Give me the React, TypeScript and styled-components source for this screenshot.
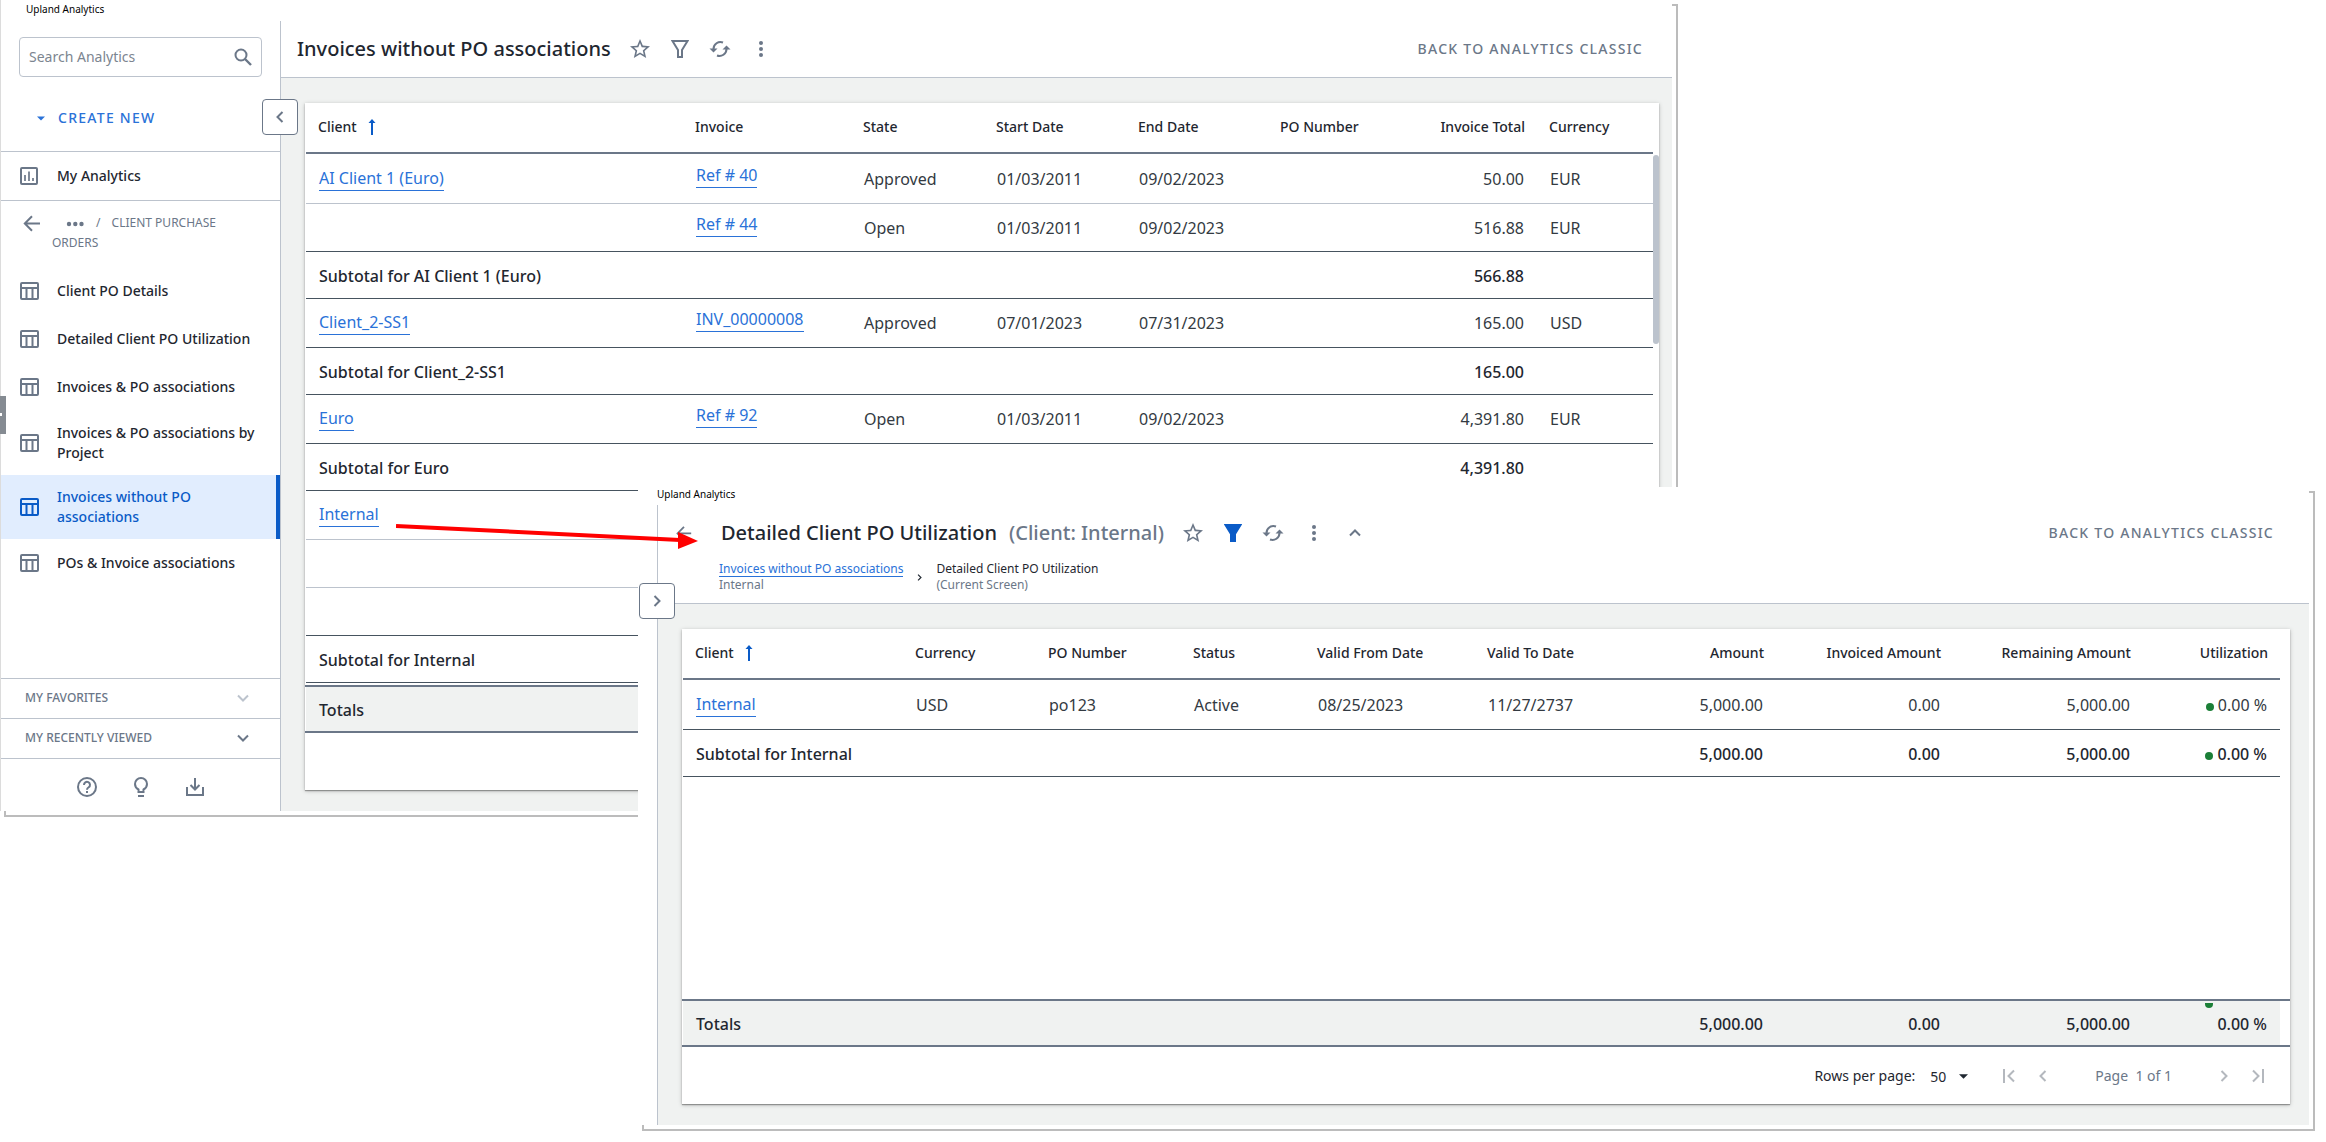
import React from 'react';
import styled, { createGlobalStyle, css } from 'styled-components';

const color = {
  ink: '#1f2730',
  body: '#333a42',
  slate: '#6b7788',
  line: '#bcc3cd',
  rule: '#46535f',
  blue: '#0a5bc7',
  link: '#2a72d8',
  wash: '#f0f2f1',
  pale: '#b4b8be',
  green: '#1b7f37',
};

const GlobalStyle = createGlobalStyle`
  *, *::before, *::after { box-sizing: border-box; }
  body {
    margin: 0;
    background: #fff;
    color: ${color.ink};
    font-family: 'Noto Sans', 'Open Sans', sans-serif;
    font-size: 14px;
    line-height: 20px;
  }
  button, input, select { font: inherit; color: inherit; }
  button { border: 0; padding: 0; background: none; cursor: pointer; }
  a { color: inherit; text-decoration: none; }
  svg { display: block; flex: none; }
`;

/* ---------- desktop and windows ---------- */

const Desktop = styled.div`
  position: relative;
  min-height: 100vh;
  min-width: 1600px;
  overflow: hidden;
`;

const WindowFrame = styled.section<{ $front?: boolean }>`
  position: absolute;
  isolation: isolate;
  padding: 0 6px 6px 0;
  ${(p) =>
    p.$front
      ? css`left: 638px; right: 11px; top: 487px; background: #fff;`
      : css`left: 0; right: 648px; top: 0;`}
  &::before {
    content: '';
    position: absolute;
    inset: 4px 0 0 4px;
    border: 2px solid #bcbcbc;
    z-index: -1;
  }
`;

const WindowBody = styled.div<{ $edge?: boolean }>`
  background: #fff;
  border-left: ${(p) => (p.$edge ? '1px solid #dcdcdc' : '0')};
`;

const Caption = styled.div<{ $front?: boolean }>`
  height: ${(p) => (p.$front ? 18 : 21)}px;
  padding-left: ${(p) => (p.$front ? 19 : 25)}px;
  font-size: 10px;
  line-height: ${(p) => (p.$front ? 14 : 18)}px;
  color: #000;
`;

const Columns = styled.div`
  display: flex;
`;

/* ---------- sidebar ---------- */

const Sidebar = styled.aside`
  display: flex;
  flex-direction: column;
  width: 279px;
  flex: none;
`;

const Rail = styled.div`
  width: 19px;
  flex: none;
`;

const SearchBox = styled.label`
  display: flex;
  align-items: center;
  height: 40px;
  margin: 16px 18px 0;
  padding: 0 8px 0 9px;
  border: 1px solid ${color.line};
  border-radius: 4px;
  color: ${color.slate};
`;

const SearchInput = styled.input`
  flex: 1;
  min-width: 0;
  border: 0;
  outline: 0;
  padding: 0;
  background: none;
  &::placeholder { color: #7c8590; opacity: 1; }
`;

const CreateButton = styled.button`
  display: flex;
  align-items: center;
  gap: 13px;
  margin: 31px 0 23px 36px;
  color: ${color.link};
  font-weight: 500;
  letter-spacing: 0.09em;
`;

const MyAnalytics = styled.a`
  display: flex;
  align-items: center;
  gap: 18px;
  height: 50px;
  padding-left: 18px;
  border: solid ${color.line};
  border-width: 1px 0;
  font-weight: 500;
  svg { color: ${color.slate}; }
`;

const Trail = styled.div`
  display: flex;
  gap: 10px;
  padding: 12px 24px 14px 21px;
  color: ${color.slate};
  font-size: 12px;
`;

const TrailText = styled.div`
  svg { display: inline-block; margin: 0 12px 0 14px; }
  span { margin-right: 8px; }
`;

const NavList = styled.nav`
  flex: 1;
`;

const NavLink = styled.a<{ $active?: boolean }>`
  display: flex;
  align-items: center;
  gap: 18px;
  min-height: 48px;
  padding: 12px 18px;
  font-weight: 500;
  ${(p) =>
    p.$active &&
    css`
      background: #e1edfe;
      color: ${color.blue};
      border-right: 4px solid ${color.blue};
    `}
  svg { color: ${(p) => (p.$active ? color.blue : color.slate)}; }
`;

const Drawer = styled.button<{ $muted?: boolean }>`
  display: flex;
  align-items: center;
  justify-content: space-between;
  height: 40px;
  padding: 0 31px 2px 24px;
  border-top: 1px solid ${color.line};
  color: ${color.slate};
  font-size: 12px;
  font-weight: 500;
  svg { color: ${(p) => (p.$muted ? color.line : color.slate)}; }
`;

const HelpBar = styled.div`
  display: flex;
  justify-content: center;
  align-items: center;
  gap: 34px;
  height: 53px;
  padding-top: 4px;
  border-top: 1px solid ${color.line};
  color: ${color.slate};
`;

const DragHandle = styled.div`
  position: absolute;
  left: 0;
  top: 396px;
  width: 6px;
  height: 38px;
  background: #858b92;
  &::after {
    content: '';
    position: absolute;
    left: 0;
    top: 17px;
    width: 2px;
    height: 3px;
    background: #fff;
  }
`;

/* ---------- report pane ---------- */

const Pane = styled.main`
  position: relative;
  flex: 1;
  min-width: 0;
  border-left: 1px solid ${color.line};
  background: ${color.wash};
`;

const PaneToggle = styled.button`
  position: absolute;
  left: -19px;
  top: 78px;
  display: grid;
  place-items: center;
  width: 36px;
  height: 36px;
  border: 1px solid ${color.slate};
  border-radius: 4px;
  background: #fff;
  color: ${color.slate};
`;

const PaneHeader = styled.header`
  background: #fff;
  border-bottom: 1px solid ${color.line};
`;

const TitleRow = styled.div<{ $left: number; $right: number }>`
  display: flex;
  align-items: center;
  height: 56px;
  padding: 0 ${(p) => p.$right}px 0 ${(p) => p.$left}px;
`;

const Title = styled.h1`
  margin: 0;
  font-size: 20px;
  line-height: 28px;
  font-weight: 500;
  white-space: nowrap;
`;

const TitleNote = styled.span`
  margin-left: 12px;
  color: ${color.slate};
  font-size: 20px;
  line-height: 28px;
  font-weight: 500;
`;

const BackButton = styled.button`
  margin-right: 28px;
  color: ${color.slate};
`;

const Tools = styled.div`
  display: flex;
  gap: 16px;
  margin: 0 auto 0 17px;
  color: ${color.slate};
`;

const Tool = styled.button<{ $on?: boolean; $wide?: boolean }>`
  display: grid;
  place-items: center;
  width: ${(p) => (p.$wide ? 26 : 24)}px;
  height: 24px;
  color: ${(p) => (p.$on ? color.blue : 'inherit')};
`;

const ClassicLink = styled.a`
  color: ${color.slate};
  font-weight: 500;
  letter-spacing: 0.09em;
  white-space: nowrap;
`;

const Crumbs = styled.ol`
  display: flex;
  align-items: center;
  gap: 13px;
  margin: 0;
  padding: 0 0 10px 61px;
  list-style: none;
  font-size: 12px;
  line-height: 16px;
  height: 42px;
`;

const CrumbNote = styled.div`
  color: ${color.slate};
`;

const CrumbLink = styled.a`
  display: block;
  color: ${color.link};
  border-bottom: 1px solid ${color.link};
  line-height: 15px;
`;

const Card = styled.div<{ $right: number }>`
  margin: 25px ${(p) => p.$right}px 21px 24px;
  background: #fff;
  box-shadow: 0 1px 1px rgba(0, 0, 0, 0.3), 0 1px 4px rgba(0, 0, 0, 0.25);
`;

const Scroller = styled.div<{ $minHeight: number; $gutter: number }>`
  display: flex;
  align-items: flex-start;
  min-height: ${(p) => p.$minHeight}px;
  padding: 0 ${(p) => p.$gutter}px 0 1px;
`;

const Thumb = styled.div`
  width: 6px;
  height: 189px;
  margin-top: 52px;
  border-radius: 3px;
  background: ${color.line};
`;

const Grid = styled.table`
  flex: 1;
  width: 100%;
  min-width: 0;
  table-layout: fixed;
  border-collapse: separate;
  border-spacing: 0;
`;

const HeadCell = styled.th<{ $right?: boolean }>`
  height: 51px;
  padding: 0 12px 2px;
  border-bottom: 2px solid ${color.slate};
  font-weight: 500;
  text-align: ${(p) => (p.$right ? 'right' : 'left')};
  white-space: nowrap;
`;

const SortLabel = styled.span`
  display: flex;
  align-items: center;
  gap: 11px;
`;

const Row = styled.tr<{ $height: number; $strong?: boolean; $ends?: boolean }>`
  height: ${(p) => p.$height}px;
  color: ${(p) => (p.$strong ? color.ink : color.body)};
  font-weight: ${(p) => (p.$strong ? 500 : 400)};
  td {
    border-bottom: 1px solid ${(p) => (p.$ends ? color.rule : color.line)};
    padding-top: ${(p) => (p.$strong ? 2 : 0)}px;
  }
`;

const Cell = styled.td<{ $right?: boolean; $lift?: number }>`
  padding: 0 13px ${(p) => p.$lift ?? 0}px;
  font-size: 16px;
  line-height: 24px;
  text-align: ${(p) => (p.$right ? 'right' : 'left')};
  white-space: nowrap;
`;

const CellLink = styled.a`
  display: inline-block;
  vertical-align: top;
  color: ${color.link};
  border-bottom: 1px solid ${color.link};
`;

const TotalsBar = styled.div<{ $gutter: number; $gap?: number }>`
  margin-top: ${(p) => p.$gap ?? 0}px;
  padding: 0 ${(p) => p.$gutter}px 0 1px;
  border: solid ${color.slate};
  border-width: 2px 0;
  table { background: ${color.wash}; }
  tr { height: 44px; font-weight: 500; }
  td { padding-top: 2px; }
`;

const Dot = styled.span`
  display: inline-block;
  width: 8px;
  height: 8px;
  margin-right: 4px;
  border-radius: 50%;
  background: ${color.green};
`;

const ClippedDot = styled(Dot)`
  position: absolute;
  height: 5px;
  margin: -9px 0 0 -12px;
  border-radius: 0 0 4px 4px;
`;

const Pager = styled.footer`
  display: flex;
  align-items: center;
  justify-content: flex-end;
  height: 57px;
  padding-right: 20px;
  color: ${color.pale};
`;

const RowsLabel = styled.label`
  display: flex;
  align-items: center;
  gap: 15px;
  margin-right: 29px;
  color: ${color.ink};
`;

const SelectWrap = styled.span`
  display: flex;
  align-items: center;
  padding-top: 2px;
  select {
    appearance: none;
    width: 29px;
    padding: 0;
    border: 0;
    background: none;
  }
`;

const PageText = styled.span`
  margin: 0 40px;
  color: ${color.slate};
  white-space: pre;
`;

const PageButton = styled.button`
  display: grid;
  place-items: center;
  width: 24px;
  height: 24px;
  & + & { margin-left: 10px; }
`;

const Pointer = styled.svg`
  position: absolute;
  left: 396px;
  top: 518px;
  pointer-events: none;
`;

/* ---------- icons ---------- */

const stroke = { fill: 'none', stroke: 'currentColor', strokeWidth: 2 } as const;

const SearchIcon = () => (
  <svg width="20" height="20" viewBox="0 0 20 20" {...stroke}>
    <circle cx="8" cy="8" r="5.5" />
    <path d="M12 12l6 6" strokeWidth="2.4" />
  </svg>
);
const CaretDown = ({ width = 8 }: { width?: number }) => (
  <svg width={width} height="5" viewBox="0 0 10 5"><path d="M0 0h10L5 5z" fill="currentColor" /></svg>
);
const ChartIcon = () => (
  <svg width="20" height="20" viewBox="0 0 20 20" {...stroke}>
    <rect x="2" y="2" width="16" height="16" rx="1" />
    <path d="M6 9v6M10 5.500v9.500M14 12v3" strokeWidth="1.7" />
  </svg>
);
const TableIcon = () => (
  <svg width="20" height="20" viewBox="0 0 20 20" {...stroke}>
    <rect x="2" y="2" width="17" height="16" rx="1" />
    <path d="M2 7h17M7.500 7v11M13.500 7v11" />
  </svg>
);
const ArrowLeft = ({ size = 20 }: { size?: number }) => (
  <svg width={size} height={size} viewBox="0 0 20 20" {...stroke}><path d="M18 10.500H3.500M10 3.200L2.800 10.500l7.200 7.300" /></svg>
);
const MoreDots = () => (
  <svg width="18" height="6" viewBox="0 0 18 6" fill="currentColor">
    <circle cx="3" cy="3" r="2.2" /><circle cx="9.300" cy="3" r="2.2" /><circle cx="15.500" cy="3" r="2.2" />
  </svg>
);
const Chevron = ({ turn = 0, size = 12 }: { turn?: number; size?: number }) => (
  <svg width={size} height={size} viewBox="0 0 12 12" {...stroke}>
    <path d="M1 3.5l5 5 5-5" transform={`rotate(${turn} 6 6)`} />
  </svg>
);
const EdgeChevron = ({ last = false }: { last?: boolean }) => (
  <svg width="14" height="14" viewBox="0 0 14 14" {...stroke}>
    <path d={last ? 'M2 1.5L7.500 7 2 12.500M12 0v14' : 'M12 1.500L6.500 7l5.500 5.500M2 0v14'} />
  </svg>
);
const HelpIcon = () => (
  <svg width="20" height="20" viewBox="0 0 20 20" {...stroke}>
    <circle cx="10" cy="10" r="9" />
    <path d="M7 8a3 3 0 1 1 4.700 2.300C10.500 11.100 10 11.600 10 12.700M10 14v2" />
  </svg>
);
const BulbIcon = () => (
  <svg width="20" height="20" viewBox="0 0 20 20" {...stroke}>
    <path d="M7.500 15v-2.500C5.300 11.300 4 9.500 4 7a6 6 0 0 1 12 0c0 2.500-1.300 4.300-3.500 5.500V15zM7 19h6" />
  </svg>
);
const DownloadIcon = () => (
  <svg width="20" height="20" viewBox="0 0 20 20" {...stroke}>
    <path d="M10 1v11M5.500 8l4.500 4.500L14.500 8M2 10v8h16v-8" />
  </svg>
);
const StarIcon = () => (
  <svg width="24" height="24" viewBox="0 0 24 24" fill="currentColor">
    <path d="M22 9.240l-7.190-.620L12 2 9.190 8.630 2 9.240l5.460 4.730L5.820 21 12 17.270 18.180 21l-1.630-7.030L22 9.240zM12 15.400l-3.760 2.270 1-4.280-3.320-2.880 4.380-.380L12 6.100l1.710 4.040 4.380.380-3.320 2.880 1 4.280L12 15.400z" />
  </svg>
);
const FunnelIcon = ({ solid = false }: { solid?: boolean }) => (
  <svg width="18" height="18" viewBox="0 0 18 18" {...stroke}>
    <path d="M1.500 1h15L11 10v7H7v-7z" fill={solid ? 'currentColor' : 'none'} />
  </svg>
);
const RefreshIcon = () => (
  <svg width="22" height="18" viewBox="0 0 22 18" {...stroke}>
    <path d="M4.500 10V9a7 7 0 0 1 9.500-6.500M17.500 8v1A7 7 0 0 1 8 15.500" />
    <path d="M.5 8.500h8L4.500 12.500zM13.500 9.500h8l-4-4z" fill="currentColor" stroke="none" />
  </svg>
);
const KebabIcon = () => (
  <svg width="6" height="18" viewBox="0 0 6 18" fill="currentColor">
    <circle cx="3" cy="3" r="2" /><circle cx="3" cy="9" r="2" /><circle cx="3" cy="15" r="2" />
  </svg>
);
const SortArrow = () => (
  <svg width="8" height="16" viewBox="0 0 8 16" fill={color.blue}>
    <path d="M4 0l3.500 4H5v12H3V4H.5z" />
  </svg>
);

/* ---------- data ---------- */

type Column = { label: string; width?: number; right?: boolean };
type RowData = {
  height: number;
  strong?: boolean;
  ends?: boolean;
  cells: string[];
};

const invoiceColumns: Column[] = [
  { label: 'Client' },
  { label: 'Invoice', width: 168 },
  { label: 'State', width: 133 },
  { label: 'Start Date', width: 142 },
  { label: 'End Date', width: 142 },
  { label: 'PO Number', width: 132 },
  { label: 'Invoice Total', width: 137, right: true },
  { label: 'Currency', width: 116 },
];

const subtotal = (name: string, ...values: string[]): RowData => ({
  height: 47, strong: true, ends: true, cells: [`Subtotal for ${name}`, ...values],
});

const invoiceRows: RowData[] = [
  { height: 50, cells: ['AI Client 1 (Euro)', 'Ref # 40', 'Approved', '01/03/2011', '09/02/2023', '', '50.00', 'EUR'] },
  { height: 48, ends: true, cells: ['', 'Ref # 44', 'Open', '01/03/2011', '09/02/2023', '', '516.88', 'EUR'] },
  subtotal('AI Client 1 (Euro)', '', '', '', '', '', '566.88', ''),
  { height: 49, ends: true, cells: ['Client_2-SS1', 'INV_00000008', 'Approved', '07/01/2023', '07/31/2023', '', '165.00', 'USD'] },
  subtotal('Client_2-SS1', '', '', '', '', '', '165.00', ''),
  { height: 49, ends: true, cells: ['Euro', 'Ref # 92', 'Open', '01/03/2011', '09/02/2023', '', '4,391.80', 'EUR'] },
  subtotal('Euro', '', '', '', '', '', '4,391.80', ''),
  { height: 49, cells: ['Internal', '', '', '', '', '', '', ''] },
  { height: 48, cells: ['', '', '', '', '', '', '', ''] },
  { height: 48, ends: true, cells: ['', '', '', '', '', '', '', ''] },
  subtotal('Internal', '', '', '', '', '', '', ''),
];

const orderColumns: Column[] = [
  { label: 'Client' },
  { label: 'Currency', width: 133 },
  { label: 'PO Number', width: 145 },
  { label: 'Status', width: 124 },
  { label: 'Valid From Date', width: 170 },
  { label: 'Valid To Date', width: 170 },
  { label: 'Amount', width: 131, right: true },
  { label: 'Invoiced Amount', width: 177, right: true },
  { label: 'Remaining Amount', width: 190, right: true },
  { label: 'Utilization', width: 137, right: true },
];

const orderRows: RowData[] = [
  { height: 50, ends: true, cells: ['Internal', 'USD', 'po123', 'Active', '08/25/2023', '11/27/2737', '5,000.00', '0.00', '5,000.00', '0.00 %'] },
  subtotal('Internal', '', '', '', '', '', '5,000.00', '0.00', '5,000.00', '0.00 %'),
];

const linkLift: Record<string, number> = { Client: 1, Invoice: 7 };

const Cols = ({ columns }: { columns: Column[] }) => (
  <colgroup>
    {columns.map((c) => <col key={c.label} width={c.width} />)}
  </colgroup>
);

type CellContentProps = { column: Column; text: string; strong?: boolean; clipped?: boolean };

const CellContent = ({ column, text, strong, clipped }: CellContentProps) => {
  if (!text) return null;
  if (!strong && column.label in linkLift) return <CellLink href="#">{text}</CellLink>;
  if (column.label === 'Utilization') return <>{clipped ? <ClippedDot /> : <Dot />}{text}</>;
  return <>{text}</>;
};

const ReportTable = ({ columns, rows }: { columns: Column[]; rows: RowData[] }) => (
  <Grid>
    <Cols columns={columns} />
    <thead>
      <tr>
        {columns.map((c, i) => (
          <HeadCell key={c.label} $right={c.right} scope="col">
            {i === 0 ? <SortLabel>{c.label}<SortArrow /></SortLabel> : c.label}
          </HeadCell>
        ))}
      </tr>
    </thead>
    <tbody>
      {rows.map((row, r) => (
        <Row key={r} $height={row.height} $strong={row.strong} $ends={row.ends}>
          {columns.map((c, i) => (
            <Cell key={c.label} $right={c.right} $lift={row.strong ? 0 : linkLift[c.label]}>
              <CellContent column={c} text={row.cells[i]} strong={row.strong} />
            </Cell>
          ))}
        </Row>
      ))}
    </tbody>
  </Grid>
);

const Totals = ({ columns, values, gutter, gap }: { columns: Column[]; values: string[]; gutter: number; gap?: number }) => (
  <TotalsBar $gutter={gutter} $gap={gap}>
    <Grid>
      <Cols columns={columns} />
      <tbody>
        <tr>
          {columns.map((c, i) => (
            <Cell key={c.label} $right={c.right}>
              <CellContent column={c} text={values[i] ?? ''} strong clipped />
            </Cell>
          ))}
        </tr>
      </tbody>
    </Grid>
  </TotalsBar>
);

const HeaderTools = ({ filtered }: { filtered?: boolean }) => (
  <Tools>
    <Tool aria-label="Favorite"><StarIcon /></Tool>
    <Tool aria-label="Filter" $on={filtered}><FunnelIcon solid={filtered} /></Tool>
    <Tool aria-label="Refresh"><RefreshIcon /></Tool>
    <Tool aria-label="More" $wide><KebabIcon /></Tool>
    {filtered && <Tool aria-label="Collapse"><Chevron turn={180} /></Tool>}
  </Tools>
);

const navItems = [
  'Client PO Details',
  'Detailed Client PO Utilization',
  'Invoices & PO associations',
  'Invoices & PO associations by Project',
  'Invoices without PO associations',
  'POs & Invoice associations',
];

const InvoicesWindow = () => (
  <WindowFrame>
    <WindowBody $edge>
      <Caption>Upland Analytics</Caption>
      <Columns>
        <Sidebar>
          <SearchBox>
            <SearchInput placeholder="Search Analytics" aria-label="Search Analytics" />
            <SearchIcon />
          </SearchBox>
          <CreateButton><CaretDown />CREATE NEW</CreateButton>
          <MyAnalytics href="#"><ChartIcon />My Analytics</MyAnalytics>
          <Trail>
            <ArrowLeft />
            <TrailText><MoreDots /><span>/</span> CLIENT PURCHASE ORDERS</TrailText>
          </Trail>
          <NavList>
            {navItems.map((item) => (
              <NavLink key={item} href="#" $active={item === 'Invoices without PO associations'}>
                <TableIcon />{item}
              </NavLink>
            ))}
          </NavList>
          <Drawer $muted>MY FAVORITES<Chevron /></Drawer>
          <Drawer>MY RECENTLY VIEWED<Chevron /></Drawer>
          <HelpBar>
            <button aria-label="Help"><HelpIcon /></button>
            <button aria-label="Tips"><BulbIcon /></button>
            <button aria-label="Download"><DownloadIcon /></button>
          </HelpBar>
        </Sidebar>
        <Pane>
          <PaneHeader>
            <TitleRow $left={16} $right={29}>
              <Title>Invoices without PO associations</Title>
              <HeaderTools />
              <ClassicLink href="#">BACK TO ANALYTICS CLASSIC</ClassicLink>
            </TitleRow>
          </PaneHeader>
          <PaneToggle aria-label="Hide navigation"><Chevron turn={90} /></PaneToggle>
          <Card $right={13}>
            <Scroller $minHeight={580} $gutter={0}>
              <ReportTable columns={invoiceColumns} rows={invoiceRows} />
              <Thumb />
            </Scroller>
            <Totals columns={invoiceColumns} values={['Totals']} gutter={6} gap={2} />
            <Pager />
          </Card>
        </Pane>
      </Columns>
    </WindowBody>
    <DragHandle />
  </WindowFrame>
);

const UtilizationWindow = () => (
  <WindowFrame $front>
    <WindowBody>
      <Caption $front>Upland Analytics</Caption>
      <Columns>
        <Rail />
        <Pane>
          <PaneHeader>
            <TitleRow $left={17} $right={35}>
              <BackButton aria-label="Back"><ArrowLeft size={18} /></BackButton>
              <Title>Detailed Client PO Utilization</Title>
              <TitleNote>(Client: Internal)</TitleNote>
              <HeaderTools filtered />
              <ClassicLink href="#">BACK TO ANALYTICS CLASSIC</ClassicLink>
            </TitleRow>
            <Crumbs>
              <li><CrumbLink href="#">Invoices without PO associations</CrumbLink><CrumbNote>Internal</CrumbNote></li>
              <li aria-hidden="true"><Chevron turn={-90} size={7} /></li>
              <li>Detailed Client PO Utilization<CrumbNote>(Current Screen)</CrumbNote></li>
            </Crumbs>
          </PaneHeader>
          <PaneToggle aria-label="Show navigation"><Chevron turn={-90} /></PaneToggle>
          <Card $right={19}>
            <Scroller $minHeight={370} $gutter={10}>
              <ReportTable columns={orderColumns} rows={orderRows} />
            </Scroller>
            <Totals
              columns={orderColumns}
              values={['Totals', '', '', '', '', '', '5,000.00', '0.00', '5,000.00', '0.00 %']}
              gutter={10}
            />
            <Pager>
              <RowsLabel>
                Rows per page:
                <SelectWrap>
                  <select defaultValue="50"><option>50</option></select>
                  <CaretDown width={9} />
                </SelectWrap>
              </RowsLabel>
              <PageButton aria-label="First page"><EdgeChevron /></PageButton>
              <PageButton aria-label="Previous page"><Chevron turn={90} /></PageButton>
              <PageText>Page  1 of 1</PageText>
              <PageButton aria-label="Next page"><Chevron turn={-90} /></PageButton>
              <PageButton aria-label="Last page"><EdgeChevron last /></PageButton>
            </Pager>
          </Card>
        </Pane>
      </Columns>
    </WindowBody>
  </WindowFrame>
);

export default function App() {
  return (
    <Desktop>
      <GlobalStyle />
      <InvoicesWindow />
      <UtilizationWindow />
      <Pointer width="304" height="34" viewBox="0 0 304 34" aria-hidden="true">
        <path d="M0 8l284 14" stroke="#f00" strokeWidth="4" />
        <path d="M282 14l20 9-20 8z" fill="#f00" />
      </Pointer>
    </Desktop>
  );
}
